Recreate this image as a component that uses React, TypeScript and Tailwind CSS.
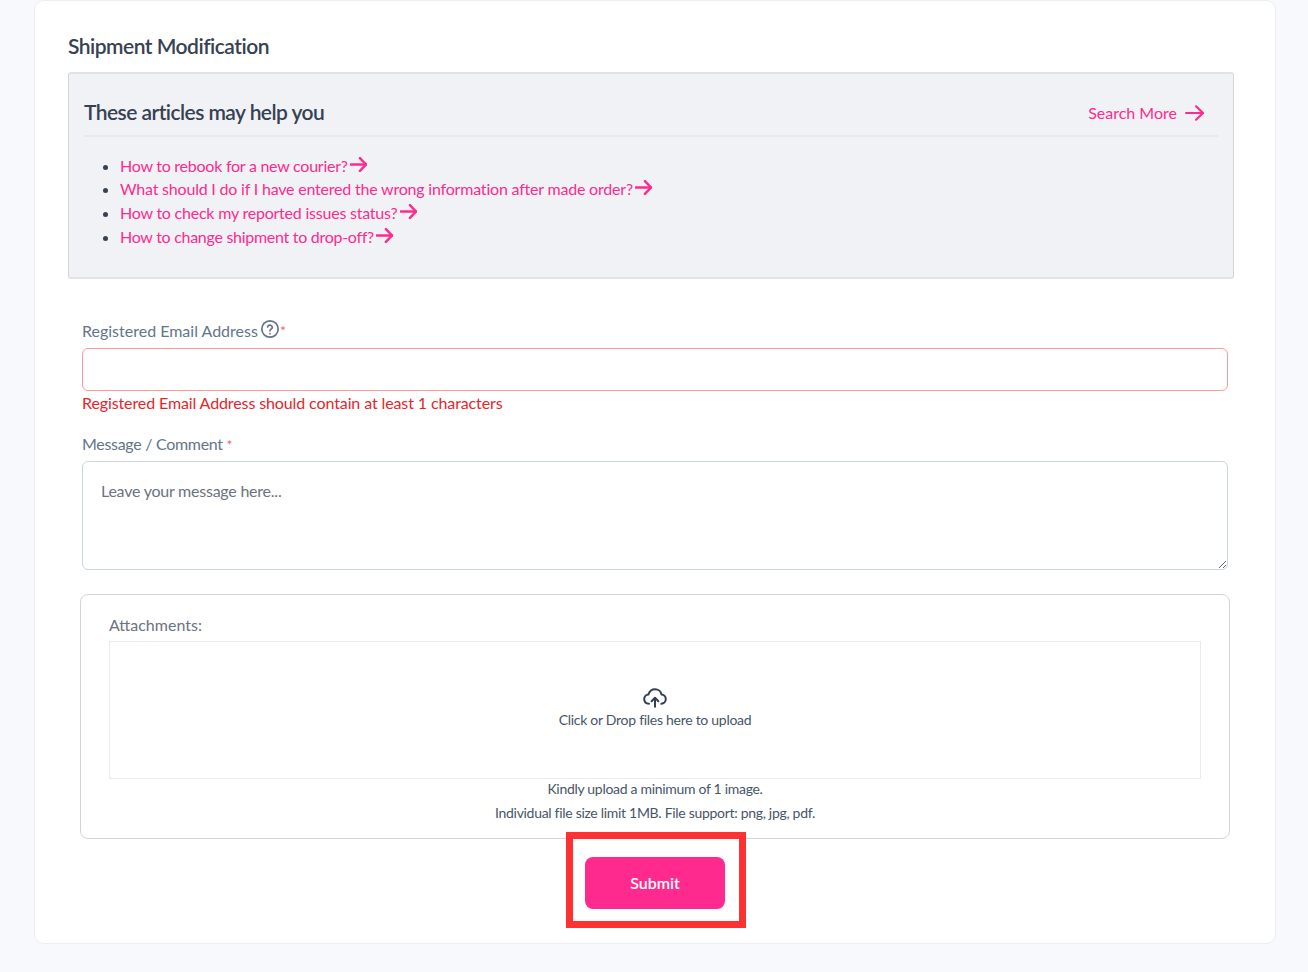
import React from 'react'

const ARTICLES = [
  { title: 'How to rebook for a new courier?', cls: 'h-[23px] tracking-[-0.25px]' },
  { title: 'What should I do if I have entered the wrong information after made order?', cls: 'h-[24px] tracking-[-0.2px]' },
  { title: 'How to check my reported issues status?', cls: 'h-[24px] tracking-[-0.22px]' },
  { title: 'How to change shipment to drop-off?', cls: 'h-[24px] tracking-[-0.28px]' },
]

const Arrow = ({ w, h, stroke }: { w: number; h: number; stroke: number }) => (
  <svg width={w} height={h} viewBox="0 0 18 16" preserveAspectRatio="none" fill="none" stroke="#ff2a8d" strokeWidth={stroke} strokeLinecap="round" strokeLinejoin="round">
    <path d="M1 8h16" />
    <path d="M10.500 1.200 17 8l-6.500 6.800" />
  </svg>
)

const HelpIcon = () => (
  <svg width="20" height="20" viewBox="0 0 20 20" fill="none" stroke="#64748b" strokeWidth="1.7" strokeLinecap="round" strokeLinejoin="round">
    <circle cx="10" cy="10" r="8.2" />
    <path d="M7.600 7.900a2.400 2.400 0 0 1 4.700.5c0 1.600-2.300 1.900-2.300 3.400" />
    <path d="M10 14.600v.1" />
  </svg>
)

const CloudUpload = () => (
  <svg width="24" height="20" viewBox="0 0 24 20" fill="none" stroke="#334155" strokeWidth="2" strokeLinecap="round" strokeLinejoin="round">
    <path d="M6 15.800C3.200 15.600 1.200 13.600 1.200 11c0-2.500 1.900-4.400 4.300-4.600C6.500 3.200 9 1.200 12 1.200c3.400 0 6 2.300 6.500 5.300 2.500.2 4.300 2.200 4.300 4.600 0 2.500-1.900 4.500-4.500 4.700" />
    <path d="M12 18.800v-8.600" />
    <path d="M8.600 13.200 12 9.800l3.400 3.400" />
  </svg>
)

export default function App() {
  return (
    <div className="h-[972px] overflow-hidden bg-[#f8f9fc] pr-[32px] pl-[34px] font-['Lato',sans-serif]">
      <div className="h-[944px] rounded-[10px] border border-[#eceef3] bg-white pr-[41px] pl-[33px]">
        <h2 className="mt-[31px] h-[40px] text-[21px] leading-[28px] font-semibold tracking-[-0.5px] text-[#364152]">Shipment Modification</h2>

        <section className="h-[207px] rounded-[3px] border-x border-y-2 border-x-[#d4d5d9] border-y-[#e2e3e6] bg-[#f1f2f6] px-[15px]">
          <div className="flex h-[63px] items-center justify-between border-b-2 border-[#e8e9ed] pt-[17px]">
            <h3 className="mb-[2px] text-[21px] leading-[28px] font-semibold tracking-[-0.55px] text-[#364152]">These articles may help you</h3>
            <a className="mr-[14px] flex items-center gap-[8px] text-[16px] text-[#ff2a8d]">
              Search More
              <Arrow w={19} h={16} stroke={2} />
            </a>
          </div>
          <ul className="mt-[17px] list-disc pl-[36px] text-[#364152] marker:text-[#364152]">
            {ARTICLES.map((a) => (
              <li key={a.title} className={`${a.cls} text-[16px] leading-[24px]`}>
                <a className="inline-flex items-center text-[#ff2a8d]">
                  {a.title}
                  <span className="-mt-[3px] ml-[2px]"><Arrow w={17} h={15} stroke={2.6} /></span>
                </a>
              </li>
            ))}
          </ul>
        </section>

        <form className="pr-[6px] pl-[14px]">
          <label className="mt-[40px] flex h-[29px] items-start text-[16px] leading-[24px] text-[#64748b]">
            <span>Registered Email Address</span>
            <span className="ml-[2px]"><HelpIcon /></span>
            <span className="text-[14px] leading-[24px] text-[#f56565]">*</span>
          </label>
          <input type="text" className="block h-[43px] w-full rounded-[6px] border border-[#fb9a9c] bg-white" />
          <p className="h-[28px] text-[16px] leading-[24px] tracking-[-0.11px] text-[#e5252a]">Registered Email Address should contain at least 1 characters</p>

          <label className="mt-[13px] block h-[29px] text-[16px] leading-[24px] tracking-[-0.3px] text-[#64748b]">
            Message / Comment <span className="text-[14px] text-[#f56565]">*</span>
          </label>
          <textarea
            placeholder="Leave your message here..."
            className="block h-[109px] w-full rounded-[6px] border border-[#cbd5e1] bg-white px-[18px] pt-[17px] pb-[18px] text-[16px] leading-[24px] tracking-[-0.23px] placeholder:text-[#6b7280]"
          />

          <div className="-mx-[2px] mt-[24px] h-[245px] rounded-[8px] border border-[#d1d5db] px-[28px] pt-[18px]">
            <p className="h-[28px] text-[16px] leading-[24px] text-[#6b7280]">Attachments:</p>
            <div className="flex h-[138px] flex-col items-center border border-[#e8eaf0] pt-[46px]">
              <CloudUpload />
              <p className="mt-[2px] text-[14px] leading-[20px] tracking-[-0.28px] text-[#475569]">Click or Drop files here to upload</p>
            </div>
            <p className="-mt-[2px] text-center text-[14px] leading-[24px] tracking-[-0.3px] text-[#475569]">Kindly upload a minimum of 1 image.</p>
            <p className="text-center text-[14px] leading-[24px] tracking-[-0.3px] text-[#475569]">Individual file size limit 1MB. File support: png, jpg, pdf.</p>
          </div>

          <div className="relative mx-auto mt-[18px] h-[52px] w-[140px]">
            <button type="button" className="h-full w-full rounded-[8px] bg-[#ff2a8d] text-[16px] font-semibold text-white">Submit</button>
            <div className="pointer-events-none absolute -top-[25px] -left-[19px] h-[96px] w-[180px] border-[7px] border-[#ff3131]" />
          </div>
        </form>
      </div>
    </div>
  )
}
